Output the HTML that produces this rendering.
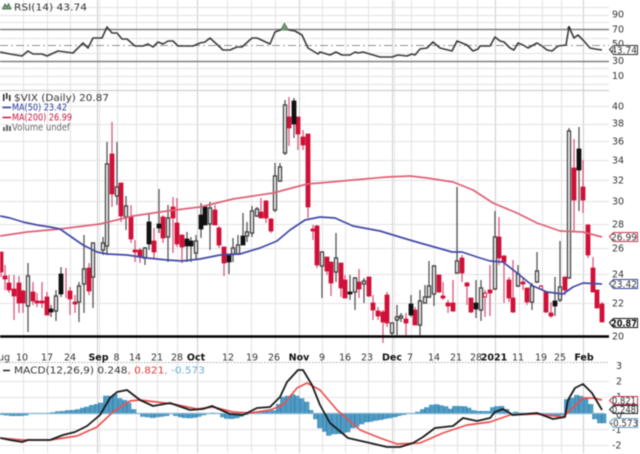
<!DOCTYPE html>
<html><head><meta charset="utf-8"><style>
html,body{margin:0;padding:0;background:#fff;width:640px;height:454px;overflow:hidden}
svg{display:block;filter:blur(.5px)}
text{font-family:"DejaVu Sans","Liberation Sans",sans-serif;font-size:9.5px;fill:#333}
.b{font-weight:bold;fill:#111}
.d text{text-anchor:middle}
</style></head><body>
<svg width="640" height="454" viewBox="0 0 640 454" xmlns="http://www.w3.org/2000/svg">
<defs>
<path id="h" d="M2 413.5V415M7 413.5V415.5M12 413.5V416M16 413.5V416M21 413.5V416M26 413.5V415.5M30 413.5V414M35 413.5V414M40 413.5V414M44 413.5V414M49 413.5V414M53 413.5V412.3M58 413.5V411.3M63 413.5V411M68 413.5V410.3M73 413.5V410M78 413.5V409.3M83 413.5V407.7M87 413.5V406.7M92 413.5V405M97 413.5V404M101 413.5V402.7M106 413.5V395.7M111 413.5V395.7M115 413.5V394M120 413.5V398.3M125 413.5V400M129 413.5V402.7M134 413.5V409.3M139 413.5V413.3M143 413.5V416.7M148 413.5V417.3M153 413.5V418M157 413.5V417.3M162 413.5V416.7M167 413.5V416M171 413.5V414M176 413.5V416M181 413.5V417.3M185 413.5V418M190 413.5V418.3M195 413.5V417.7M199 413.5V416.7M204 413.5V415.3M209 413.5V413.3M213 413.5V412.7M218 413.5V414M223 413.5V417.3M227 413.5V418.7M232 413.5V419M237 413.5V418.3M241 413.5V416.7M246 413.5V415M251 413.5V412.7M255 413.5V411.7M260 413.5V411M265 413.5V411M269 413.5V411M274 413.5V410.3M279 413.5V404M283 413.5V396.7M288 413.5V395.7M293 413.5V394.3M297 413.5V395.7M302 413.5V398.3M307 413.5V401.7M311 413.5V410M316 413.5V419.3M320 413.5V428.3M325 413.5V431.7M329 413.5V435.7M334 413.5V434.3M339 413.5V434M343 413.5V433.3M348 413.5V432.3M353 413.5V428.3M357 413.5V426.7M362 413.5V424.3M367 413.5V422.3M371 413.5V421.7M376 413.5V420.7M381 413.5V420M385 413.5V419M390 413.5V418.3M395 413.5V417.3M399 413.5V416M404 413.5V415M409 413.5V414M413 413.5V413.3M418 413.5V411.7M423 413.5V409.3M427 413.5V407.3M432 413.5V404.7M437 413.5V404.3M441 413.5V405.3M446 413.5V406.3M451 413.5V408.7M455 413.5V406M460 413.5V406M465 413.5V406.3M469 413.5V407.7M474 413.5V410.3M479 413.5V411M483 413.5V411M488 413.5V411M493 413.5V407.3M497 413.5V406.3M502 413.5V406M507 413.5V409M511 413.5V413.3M516 413.5V411.7M521 413.5V412.7M525 413.5V414M530 413.5V414M535 413.5V413.3M539 413.5V413M544 413.5V414M549 413.5V415M553 413.5V416M558 413.5V416M563 413.5V415.3M567 413.5V399.3M572 413.5V397.7M577 413.5V395M581 413.5V396M586 413.5V398.3M591 413.5V404M595 413.5V419.3M600 413.5V423.3M604 413.5V423.3"/>
</defs>
<rect width="640" height="454" fill="#fff"/>

<!-- vertical grid -->
<path stroke="#e2e2e2" stroke-width="1" fill="none" d="M23.5 0V453M47.5 0V453M70.5 0V453M117.5 0V453M136.5 0V453M157.5 0V453M177.5 0V453M227.5 0V453M251.5 0V453M275.5 0V453M322.5 0V453M345.5 0V453M368.5 0V453M411.5 0V453M434.5 0V453M457.5 0V453M477.5 0V453M519.5 0V453M542.5 0V453M561.5 0V453"/>
<path stroke="#cccccc" stroke-width="1" fill="none" d="M97.5 0V453M197.5 0V453M299.5 0V453M392.5 0V453M495.5 0V453M583.5 0V453"/>
<path stroke="#e4e4e4" stroke-width="1" fill="none" d="M99.5 0V453M394.5 0V453"/>
<!-- horizontal grid -->
<path stroke="#e2e2e2" stroke-width="1" fill="none" d="M0 7.5H609M0 15.5H609M0 22.5H609M0 38.5H609M0 53.5H609M0 68.5H609M0 76.5H609M0 84.5H609M0 106.5H609M0 124.5H609M0 141.5H609M0 160.5H609M0 180.5H609M0 201.5H609M0 224.5H609M0 248.5H609M0 274.5H609M0 303.5H609M0 381.5H609M0 397.5H609M0 429.5H609M0 445.5H609"/>
<path stroke="#cfcfcf" stroke-width="1.2" fill="none" d="M0 90.5H609"/>
<path stroke="#aaa" stroke-width="1" stroke-dasharray="1.5 1.5" fill="none" d="M0 362.5H609"/>
<!-- RSI levels -->
<path stroke="#808080" stroke-width="1.4" fill="none" d="M0 29.5H609M0 61.5H609"/>
<path stroke="#909090" stroke-width="1.1" stroke-dasharray="8 3 2 3" fill="none" d="M0 45.5H609"/>
<!-- RSI line -->
<path stroke="#3c3c3c" stroke-width="1.6" fill="none" stroke-linejoin="round" d="M0 52L10 54 22 56 28 51 33 54 42 54 47 56 58 51 73 53 83 43 88 48 93 38 102 38 107 27 112 33 117 33 122 39 127 39 135 46 143 46 148 44 153 47 158 42 163 44 168 41 173 41 178 46 193 46 200 43 205 42 210 38 223 50 230 50 237 47 242 47 252 38 257 38 270 44 275 32 283 29 295 31 302 35 308 48 318 54 320 52 330 55 336 52 342 55 350 55 355 52 358 53 363 52 380 57 392 57 398 55 407 56 412 54 415 55 420 49 427 48 433 42 440 48 452 51 457 41 467 45 473 51 478 49 480 46 490 46 495 37 500 41 504 42 510 48 514 50 518 43 523 45 528 48 537 43 542 46 547 50 552 51 558 46 566 45 569 27 574 38 578 35 583 40 590 48 595 49 602 50"/>
<path fill="#6f9a72" stroke="#3f5f42" stroke-width=".6" d="M284.5 23L288.5 30H280.5Z"/>
<path fill="#222" d="M569 25.5L571 28.5H567Z"/>

<!-- wicks red -->
<path stroke="#d8587e" stroke-width="1.3" fill="none" d="M1 252V277M5 265V290M9 275V293M14 275V320M19 276V313M23 290V313M33 282V305M37 293V307M42 282V308M47 292V315M66 268V298M70 287V315M75 295V313M89 263V295M112 122V207M121 183V222M131 205V243M135 240V262M140 248V263M154 228V258M163 215V243M173 197V253M177 198V247M182 235V263M215 205V225M219 226V248M224 247V276M261 198V218M266 200V223M271 218V233M289 97V146M298 117V150M303 130V150M308 134V218M313 225V240M317 225V268M327 257V275M331 262V296M341 263V297M345 275V298M359 269V298M369 277V297M373 295V320M378 307V320M383 310V343M387 292V327M406 313V335M415 307V325M439 275V293M443 282V300M448 300V313M453 280V312M462 255V282M467 282V305M471 298V313M485 290V317M490 265V316M499 217V265M504 255V303M509 277V302M513 260V313M523 277V290M527 288V305M541 285V290M546 292V313M551 302V318M565 277V295M574 139V232M583 160V213M588 224V258M593 257V292M597 290V308M602 302V322"/>
<!-- wicks black/white -->
<path stroke="#555" stroke-width="1.3" fill="none" d="M28 263V332M51 305V317M56 290V321M61 267V297M79 282V322M84 235V313M93 243V308M103 237V255M107 142V255M117 142V205M126 196V230M145 247V265M149 213V250M159 189V233M168 205V262M187 232V262M191 237V262M196 235V259M201 203V238M205 207V225M210 202V250M229 254V274M233 238V262M238 235V255M243 213V245M247 222V242M252 206V237M257 207V217M275 163V212M280 163V182M285 100V155M294 98V138M322 252V298M336 233V282M350 275V300M355 277V310M364 278V303M392 323V335M397 305V335M401 313V322M411 295V317M420 290V335M425 285V303M429 261V298M434 265V306M457 187V273M476 280V318M481 280V321M495 211V290M518 265V287M532 283V310M537 252V283M555 277V316M560 241V302M569 128V278M579 127V211"/>
<!-- red bodies -->
<path fill="#d01038" stroke="#d01038" stroke-width=".8" d="M-1 252h4V272h-4zM3 276h4V279h-4zM7 283h4V290h-4zM12 289h4V296h-4zM17 283h4V303h-4zM21 291h4V303h-4zM31 292h4V301h-4zM35 301h4V303h-4zM40 301h4V303h-4zM45 297h4V315h-4zM68 291h4V299h-4zM73 302h4V304h-4zM87 268h4V291h-4zM110 154h4V194h-4zM119 183h4V216h-4zM129 217h4V239h-4zM133 250h4V252h-4zM138 250h4V256h-4zM152 241h4V252h-4zM161 217h4V238h-4zM171 207h4V218h-4zM175 223h4V244h-4zM180 235h4V247h-4zM213 210h4V225h-4zM217 228h4V245h-4zM222 247h4V263h-4zM259 212h4V218h-4zM264 201h4V218h-4zM269 219h4V231h-4zM287 117h4V128h-4zM296 117h4V134h-4zM301 137h4V145h-4zM306 134h4V207h-4zM311 229h4V231h-4zM315 226h4V265h-4zM325 257h4V271h-4zM329 262h4V283h-4zM339 263h4V288h-4zM343 280h4V298h-4zM357 282h4V289h-4zM367 277h4V296h-4zM371 303h4V310h-4zM376 311h4V316h-4zM381 312h4V322h-4zM385 295h4V323h-4zM404 319h4V323h-4zM413 310h4V325h-4zM437 275h4V292h-4zM441 296h4V298h-4zM446 303h4V306h-4zM451 303h4V311h-4zM460 258h4V273h-4zM465 283h4V286h-4zM469 298h4V312h-4zM488 290h4V293h-4zM497 237h4V258h-4zM502 256h4V262h-4zM507 280h4V298h-4zM511 298h4V312h-4zM521 282h4V284h-4zM525 288h4V302h-4zM544 292h4V312h-4zM549 313h4V316h-4zM563 277h4V290h-4zM572 168h4V200h-4zM581 187h4V200h-4zM586 225h4V255h-4zM591 268h4V292h-4zM595 290h4V308h-4zM600 304h4V322h-4z"/>
<!-- black bodies -->
<path fill="#111" stroke="#111" stroke-width=".8" d="M49 309h4V312h-4zM59 274h4V294h-4zM147 222h4V244h-4zM157 224h4V228h-4zM185 239h4V246h-4zM189 241h4V246h-4zM199 215h4V229h-4zM203 207h4V225h-4zM227 254h4V262h-4zM241 236h4V245h-4zM292 101h4V124h-4zM348 292h4V294h-4zM409 304h4V315h-4zM474 303h4V309h-4zM553 301h4V306h-4zM577 149h4V170h-4z"/>
<!-- white bodies -->
<path fill="#fff" stroke="#4a4a4a" stroke-width="1.4" d="M26.5 276h3V306h-3zM54.5 296h3V311h-3zM77.5 286h3V302h-3zM82.5 269h3V284h-3zM91.5 243h3V277h-3zM101.5 243h3V250h-3zM105.5 164h3V246h-3zM115.5 187h3V196h-3zM124.5 206h3V217h-3zM143.5 248h3V258h-3zM166.5 218h3V237h-3zM194.5 241h3V253h-3zM208.5 208h3V224h-3zM231.5 248h3V254h-3zM236.5 245h3V254h-3zM245.5 232h3V236h-3zM250.5 211h3V233h-3zM255.5 209h3V216h-3zM273.5 176h3V210h-3zM278.5 167h3V181h-3zM283.5 105h3V153h-3zM320.5 252h3V266h-3zM334.5 258h3V272h-3zM353.5 278h3V292h-3zM362.5 281h3V284h-3zM390.5 323h3V333h-3zM395.5 317h3V320h-3zM399.5 316h3V318h-3zM418.5 301h3V325h-3zM423.5 297h3V303h-3zM427.5 286h3V297h-3zM432.5 266h3V294h-3zM455.5 261h3V273h-3zM479.5 288h3V310h-3zM493.5 237h3V289h-3zM516.5 274h3V286h-3zM530.5 286h3V302h-3zM535.5 271h3V282h-3zM558.5 287h3V300h-3zM567.5 131h3V278h-3z"/>
<path fill="#fff" stroke="#d01038" stroke-width="1" d="M483.5 293h3V297h-3zM539.5 286h3V289h-3z"/>

<!-- MAs -->
<path stroke="#df6078" stroke-width="1.7" fill="none" stroke-linejoin="round" d="M0 236L27 232 60 229 100 224 133 216 167 211 200 207 233 199 273 193 307 184 320 183 353 180 387 177 410 176 427 178 453 182 473 190 493 203 517 213 537 223 560 231 583 232 602 237"/>
<path stroke="#4349a6" stroke-width="1.7" fill="none" stroke-linejoin="round" d="M0 216L10 218 23 222 37 225 50 227 60 229 70 236 83 245 97 252 107 254 127 255 147 258 167 260 182 261 200 259 220 255 240 254 260 248 277 241 290 230 305 220 320 217 335 218 353 226 380 231 403 238 420 243 438 248 452 252 462 252 477 257 490 261 503 262 517 273 533 286 547 292 563 294 573 287 583 283 602 284"/>
<!-- baseline -->
<path stroke="#000" stroke-width="2.4" fill="none" d="M0 336.5H609"/>

<!-- MACD -->
<g fill="none">
<use href="#h" stroke="#4f9cc6" stroke-width="4.7"/>
<use href="#h" stroke="#2c789f" stroke-width=".8" transform="translate(-2.3 0)"/>
<path stroke="#7fb2cf" stroke-width="1.2" d="M0 413.5H604"/>
<path stroke="#ee5050" stroke-width="1.7" stroke-linejoin="round" d="M0 438L23 440 50 440 77 436 97 427 113 412 130 401 140 400 173 404 197 409 213 407 233 412 250 413 270 410 283 405 297 388 307 383 320 390 337 410 360 430 380 438 397 444 420 443 443 433 467 425 490 422 510 415 537 414 563 417 583 398 593 398 602 400"/>
<path stroke="#1c1c1c" stroke-width="1.8" stroke-linejoin="round" d="M0 438L10 440 22 442 28 440 50 440 63 435 75 432 87 426 100 415 110 398 117 392 127 390 140 400 153 406 170 403 190 410 203 409 212 406 230 414 243 415 257 408 270 407 280 397 287 382 298 370 303 370 312 385 320 405 330 423 348 438 370 443 387 447 400 447 413 443 423 437 435 428 453 426 463 418 477 421 490 418 495 412 503 409 513 415 537 413 553 419 565 417 568 400 575 388 583 384 592 393 602 410"/>
</g>

<!-- legends -->
<path fill="#7fa882" stroke="#2f4f33" stroke-width=".7" d="M2.5 9L5 4 7 7 8.5 3.5 11 9Z"/>
<text x="14" y="10.5" textLength="73" lengthAdjust="spacingAndGlyphs">RSI(14) 43.74</text>
<path fill="#222" d="M3 94h1.5v7H3zM6 93h1.5v6H6zM9 95h1.5v6H9z"/>
<text x="14" y="101" textLength="95" lengthAdjust="spacingAndGlyphs">$VIX (Daily) 20.87</text>
<path stroke="#2a3a9a" stroke-width="1.5" d="M2.5 107.5H11"/>
<text x="12" y="110.5" textLength="55" lengthAdjust="spacingAndGlyphs" style="fill:#2a3a9a">MA(50) 23.42</text>
<path stroke="#c8143c" stroke-width="1.5" d="M2.5 117.5H11"/>
<text x="12" y="120.5" textLength="60" lengthAdjust="spacingAndGlyphs" style="fill:#c8143c">MA(200) 26.99</text>
<path fill="#666" d="M3 127h2v4H3zM6 125h2v6H6zM9 126h2v5H9z"/>
<text x="12" y="130.5" textLength="58" lengthAdjust="spacingAndGlyphs" style="fill:#666">Volume undef</text>
<path stroke="#222" stroke-width="1.5" d="M3 370.5H10"/>
<text x="14" y="373.5" textLength="191" lengthAdjust="spacingAndGlyphs">MACD(12,26,9) 0.248<tspan style="fill:#e03a3a">, 0.821</tspan><tspan style="fill:#6aaed6">, -0.573</tspan></text>

<!-- dates -->
<g class="d">
<text x="4" y="360.5">ug</text><text x="22" y="360.5">10</text><text x="47" y="360.5">17</text><text x="70" y="360.5">24</text><text x="98.5" y="360.5" class="b">Sep</text><text x="116.5" y="360.5">8</text><text x="135" y="360.5">14</text><text x="157" y="360.5">21</text><text x="177" y="360.5">28</text><text x="196" y="360.5" class="b">Oct</text><text x="228" y="360.5">12</text><text x="252" y="360.5">19</text><text x="274" y="360.5">26</text><text x="299" y="360.5" class="b">Nov</text><text x="322" y="360.5">9</text><text x="345" y="360.5">16</text><text x="367" y="360.5">23</text><text x="392" y="360.5" class="b">Dec</text><text x="410" y="360.5">7</text><text x="434" y="360.5">14</text><text x="456" y="360.5">21</text><text x="476" y="360.5">28</text><text x="494" y="360.5" class="b">2021</text><text x="518" y="360.5">11</text><text x="541" y="360.5">19</text><text x="560" y="360.5">25</text><text x="584" y="360.5" class="b">Feb</text>
</g>

<!-- right axis -->
<g>
<text x="612" y="17.5">90</text><text x="612" y="32.5">70</text><text x="612" y="47">50</text><text x="612" y="64">30</text><text x="612" y="79">10</text>
<text x="612" y="109.5">40</text><text x="612" y="126.5">38</text><text x="612" y="144.5">36</text><text x="612" y="163.5">34</text><text x="612" y="183.5">32</text><text x="612" y="204.5">30</text><text x="612" y="227.5">28</text><text x="612" y="251.5">26</text><text x="612" y="277.5">24</text><text x="612" y="306.5">22</text><text x="612" y="339.5">20</text>
<text x="616" y="369">3</text><text x="616" y="384.5">2</text><text x="616" y="400">1</text><text x="612" y="433">-1</text><text x="612" y="448.5">-2</text><text x="616" y="418">0</text>
</g>

<!-- value tags -->
<g stroke-width="1" fill="#fff">
<path stroke="#333" d="M609.5 49.5L613.5 45.5H637.5V54.5H613.5Z"/>
<path stroke="#d03050" d="M609.5 236.5L613.5 232.5H637.5V241.5H613.5Z"/>
<path stroke="#30409a" d="M609.5 283.5L613.5 279.5H637.5V288.5H613.5Z"/>
<path stroke="#111" d="M609.5 322.5L613.5 318.5H637.5V327.5H613.5Z"/>
<path stroke="#d03050" d="M609.5 400.5L613.5 396.5H637.5V404.5H613.5Z"/>
<path stroke="#222" d="M609.5 409.5L613.5 405.5H637.5V413.5H613.5Z"/>
<path stroke="#6a9ec4" d="M609.5 422.5L613.5 418.5H637.5V427.5H613.5Z"/>
</g>
<text x="611" y="53.5" textLength="26" lengthAdjust="spacingAndGlyphs">43.74</text>
<text x="611" y="240.5" textLength="26" lengthAdjust="spacingAndGlyphs">26.99</text>
<text x="611" y="287.5" textLength="26" lengthAdjust="spacingAndGlyphs">23.42</text>
<text x="611" y="326.5" textLength="26" lengthAdjust="spacingAndGlyphs" class="b">20.87</text>
<text x="612" y="404" textLength="24" lengthAdjust="spacingAndGlyphs">0.821</text>
<text x="612" y="413" textLength="24" lengthAdjust="spacingAndGlyphs">0.248</text>
<text x="610" y="426.5" textLength="28" lengthAdjust="spacingAndGlyphs">-0.573</text>
</svg>
</body></html>
